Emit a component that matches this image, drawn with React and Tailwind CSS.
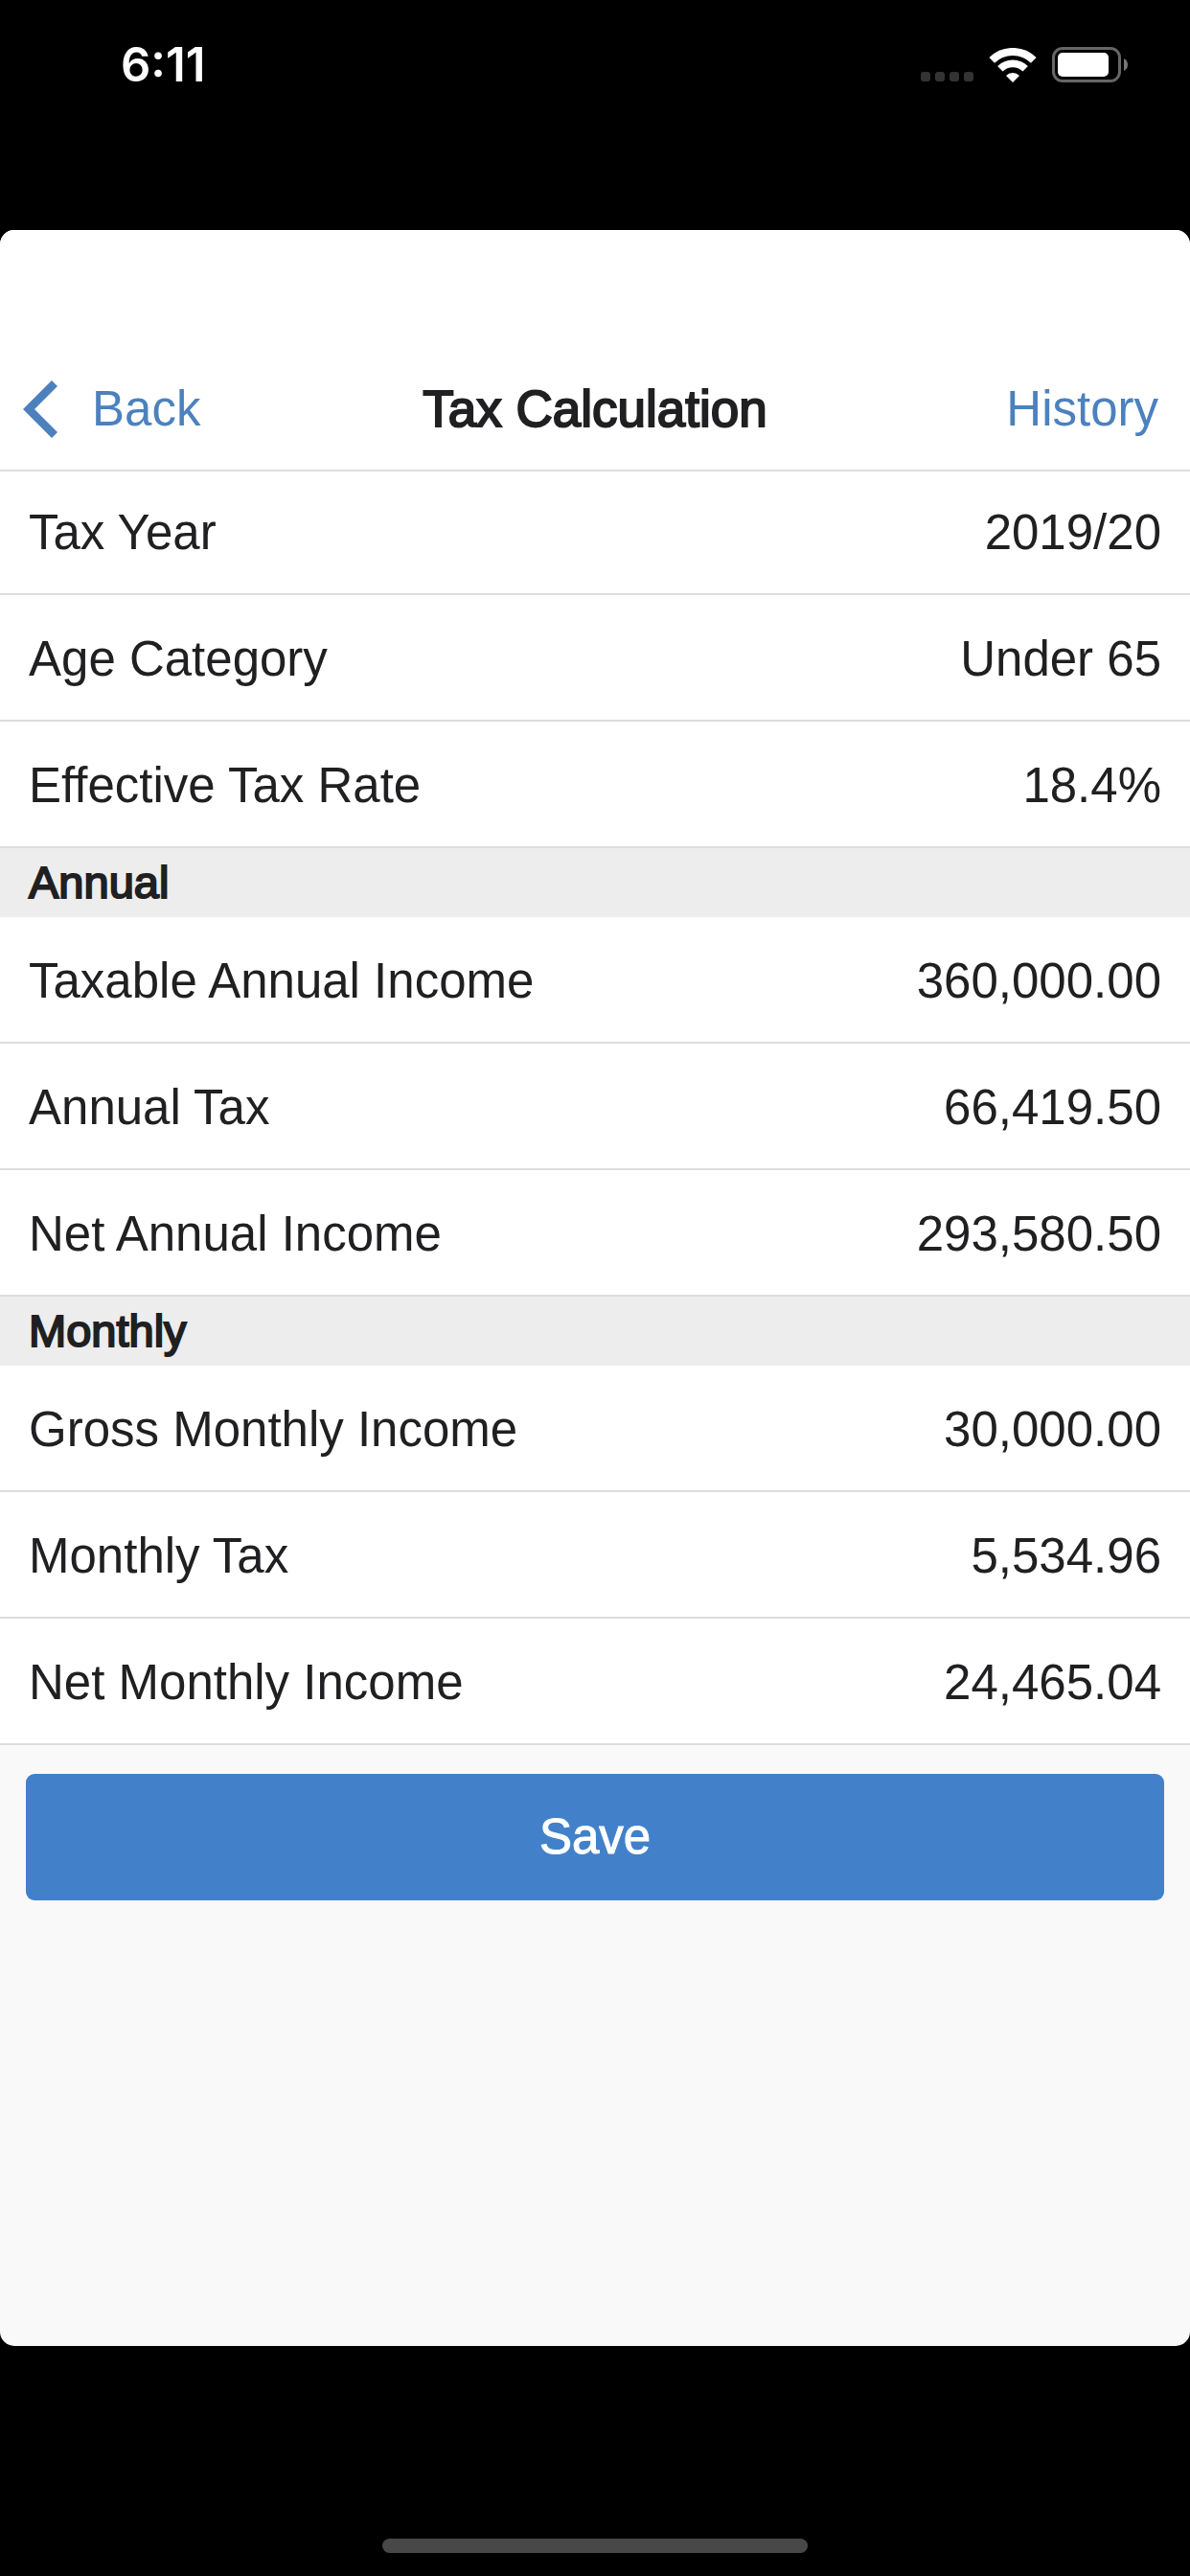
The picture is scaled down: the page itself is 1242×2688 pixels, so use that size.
const sections = [
  {
    rows: [
      ['Tax Year', '2019/20'],
      ['Age Category', 'Under 65'],
      ['Effective Tax Rate', '18.4%'],
    ],
  },
  {
    title: 'Annual',
    rows: [
      ['Taxable Annual Income', '360,000.00'],
      ['Annual Tax', '66,419.50'],
      ['Net Annual Income', '293,580.50'],
    ],
  },
  {
    title: 'Monthly',
    rows: [
      ['Gross Monthly Income', '30,000.00'],
      ['Monthly Tax', '5,534.96'],
      ['Net Monthly Income', '24,465.04'],
    ],
  },
];

function WifiIcon() {
  return (
    <svg className="h-9 w-[50px]" viewBox="0 0 50 36" fill="none" aria-label="Wi-Fi">
      <path d="M3.2 12.9 A31 31 0 0 1 46.8 12.9" stroke="white" strokeWidth="8" />
      <path d="M11.8 21.8 A18.7 18.7 0 0 1 38.2 21.8" stroke="white" strokeWidth="7.6" />
      <path d="M25 36 L18 28.9 Q20.8 26 25 26 Q29.2 26 32 28.9 Z" fill="white" />
    </svg>
  );
}

function BatteryIcon() {
  return (
    <svg className="h-[37px] w-20" viewBox="0 0 80 37" fill="none" aria-label="Battery">
      <rect x="1.5" y="1.5" width="69" height="34" rx="9.5" stroke="#666" strokeWidth="3" />
      <rect x="6" y="6" width="53" height="25" rx="5" fill="white" />
      <path d="M75 12 Q79 14 79 18.5 Q79 23 75 25 Z" fill="#777" />
    </svg>
  );
}

function StatusBar() {
  return (
    <div className="flex h-60 items-start justify-between pr-16 pl-[126px]">
      <time className="pt-10 font-['Inter',sans-serif] text-[49px] leading-14 font-semibold text-white">6:11</time>
      <div className="flex items-end gap-4 pt-[49px]">
        <div className="flex gap-[5px] pb-px">
          <span className="size-[10px] rounded-[3px] bg-[#333]" />
          <span className="size-[10px] rounded-[3px] bg-[#333]" />
          <span className="size-[10px] rounded-[3px] bg-[#333]" />
          <span className="size-[10px] rounded-[3px] bg-[#333]" />
        </div>
        <WifiIcon />
        <BatteryIcon />
      </div>
    </div>
  );
}

function NavBar() {
  return (
    <header className="grid h-[252px] grid-cols-[1fr_auto_1fr] items-end border-b-2 border-[#dcdcdc] bg-white px-[33px] pb-[31px]">
      <button type="button" className="-ml-[9px] flex items-center gap-9 justify-self-start text-[#4c81bd]">
        <svg className="h-[60px] w-9" viewBox="0 0 36 60" fill="none" aria-hidden="true">
          <path d="M33 3 L6 30 L33 57" stroke="currentColor" strokeWidth="8.5" />
        </svg>
        Back
      </button>
      <h1 className="text-[53px] [-webkit-text-stroke:2px_currentColor]">Tax Calculation</h1>
      <button type="button" className="justify-self-end text-[#4c81bd]">History</button>
    </header>
  );
}

function Row({ label, value, first }) {
  return (
    <div className={`flex justify-between border-b-2 border-[#dcdcdc] bg-white px-[30px] pb-[31px] ${first ? 'pt-8' : 'pt-[35px]'}`}>
      <dt>{label}</dt>
      <dd>{value}</dd>
    </div>
  );
}

export default function App() {
  return (
    <div className="flex min-h-screen flex-col bg-black font-['Liberation_Sans',Arial,sans-serif] text-[51px] leading-16 text-[#202022]">
      <StatusBar />
      <main className="flex flex-1 flex-col overflow-hidden rounded-[15px] bg-[#f9f9f9]">
        <NavBar />
        {sections.map((section, s) => (
          <section key={s}>
            {section.title && (
              <h2 className="bg-[#ededed] px-[30px] text-[47px] leading-[72px] [-webkit-text-stroke:2px_currentColor]">
                {section.title}
              </h2>
            )}
            <dl>
              {section.rows.map(([label, value], r) => (
                <Row key={label} label={label} value={value} first={s === 0 && r === 0} />
              ))}
            </dl>
          </section>
        ))}
        <button
          type="button"
          className="mx-[27px] mt-[30px] h-[132px] rounded-[9px] bg-[#4281ca] text-white [-webkit-text-stroke:1px_currentColor]"
        >
          Save
        </button>
      </main>
      <footer className="flex h-60 items-end justify-center pb-6">
        <div className="h-[15px] w-[444px] rounded-full bg-[#484848]" />
      </footer>
    </div>
  );
}
